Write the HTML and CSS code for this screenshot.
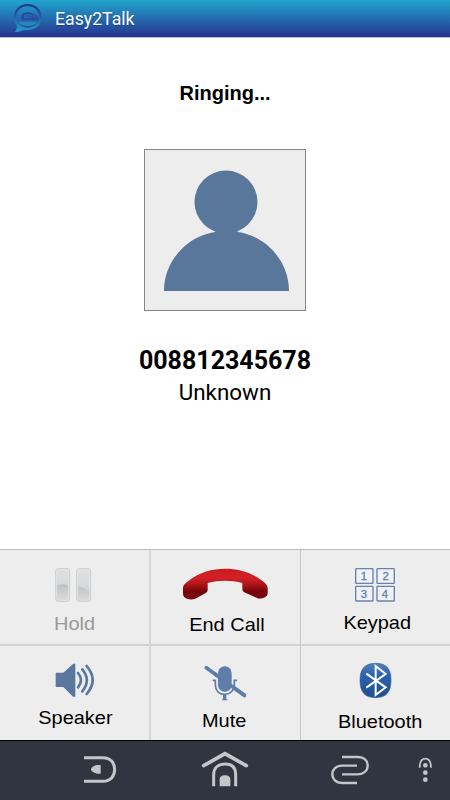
FILE: index.html
```html
<!DOCTYPE html>
<html lang="en">
<head>
  <meta charset="UTF-8" />
  <meta name="viewport" content="width=device-width, initial-scale=1.0"/>
  <title>Easy2Talk</title>
  <link rel="stylesheet" href="styles.css">
</head>
<body>

  <div class="header">
    <svg class="logo" viewBox="36 6 96 96">
      <defs>
        <linearGradient id="logo" x1="0" y1="0" x2="0" y2="1">
          <stop offset="0" stop-color="#25368f"/>
          <stop offset="0.4" stop-color="#2755a3"/>
          <stop offset="1" stop-color="#20a4cf"/>
        </linearGradient>
      </defs>
      <path fill="url(#logo)" fill-rule="evenodd" d="M83 12C107 12 125 28 125 51C125 75 107 90 83 90C75 90 70 89 64 92Q57 96 44 96Q51 90 51 79C45 72 42 62 42 51C42 28 60 12 83 12ZM83 19C63 19 49 32 49 51C49 69 63 83 83 83C103 83 117 70 117 51C117 32 103 19 83 19Z"/>
      <path fill="#2746a0" d="M64 56Q62 41 75 38Q91 33 107 44Q116 50 115 59H66Z"/>
      <path fill="none" stroke="#2a82bb" stroke-width="2" d="M72 48Q76 43 88 44L94 48H73V53H96M94 43L104 55M100 43L110 55"/>
      <path fill="#2787bd" d="M54 65H112Q104 78 83 78Q63 78 54 65Z"/>
    </svg>
    <span class="app-name">Easy2Talk</span>
  </div>

  <div class="call">
    <div class="status">Ringing...</div>
    <div class="avatar">
      <svg viewBox="0 0 162 162">
        <circle cx="82" cy="53" r="31.5"/>
        <path d="M73 79H91L94 83C122 87 145 112 145 142H20C20 112 43 87 71 83Z"/>
      </svg>
    </div>
    <div class="number">008812345678</div>
    <div class="name">Unknown</div>
  </div>

  <div class="buttons">
    <div class="button hold">
      <svg viewBox="0 30 447 165">
        <defs>
          <linearGradient id="bar" x1="0" y1="0" x2="0" y2="1">
            <stop offset="0" stop-color="#dfe0e1"/>
            <stop offset="1" stop-color="#d0d1d3"/>
          </linearGradient>
          <linearGradient id="shade" x1="0" y1="0" x2="0" y2="1">
            <stop offset="0" stop-color="#bfc1c3"/>
            <stop offset="1" stop-color="#d9dadb"/>
          </linearGradient>
        </defs>
        <g fill="url(#bar)" stroke="#cecfd0" stroke-width="3">
          <rect x="167" y="86" width="42" height="98" rx="7"/>
          <rect x="230" y="86" width="42" height="98" rx="7"/>
        </g>
        <path fill="url(#shade)" d="M171 136Q190 130 205 136V177Q205 180 200 180H176Q171 180 171 177Z"/>
        <path fill="url(#shade)" d="M234 138Q254 143 268 154V177Q268 180 263 180H239Q234 180 234 177Z"/>
        <g fill="none" stroke="#e7e8e8" stroke-width="2">
          <rect x="170" y="89" width="36" height="92" rx="5"/>
          <rect x="233" y="89" width="36" height="92" rx="5"/>
        </g>
      </svg>
      <span>Hold</span>
    </div>
    <div class="button end-call">
      <svg viewBox="3 30 447 165">
        <defs>
          <linearGradient id="red" x1="0" y1="0" x2="0" y2="1">
            <stop offset="0" stop-color="#c91d20"/>
            <stop offset="0.3" stop-color="#d32027"/>
            <stop offset="0.48" stop-color="#b5161c"/>
            <stop offset="0.75" stop-color="#75030a"/>
            <stop offset="1" stop-color="#7d060e"/>
          </linearGradient>
        </defs>
        <path fill="url(#red)" d="M99 146C98 135 105 130 116 122C149 96 186 86 226 86C266 86 304 97 338 123C348 131 354 136 353 148V160C352 171 341 176 327 176Q322 175 316 172L283 157Q277 154 277 147V129C245 120 207 120 173 129V150Q173 156 167 159L136 176C117 182 100 175 99 162Z"/>
      </svg>
      <span>End Call</span>
    </div>
    <div class="button keypad">
      <svg viewBox="3 30 447 165">
        <g fill="#eff1f4" stroke="#6583ae" stroke-width="4">
          <rect x="167" y="86" width="52" height="44" rx="2"/>
          <rect x="231" y="86" width="52" height="44" rx="2"/>
          <rect x="167" y="139" width="52" height="44" rx="2"/>
          <rect x="231" y="139" width="52" height="44" rx="2"/>
        </g>
        <g class="keys">
          <text x="192" y="120">1</text>
          <text x="257" y="120">2</text>
          <text x="192" y="173">3</text>
          <text x="255" y="173">4</text>
        </g>
      </svg>
      <span>Keypad</span>
    </div>
    <div class="button speaker">
      <svg viewBox="0 18 447 165">
        <path fill="#5a779f" d="M167 98H190L220 71H226V170H219L190 141H167Z"/>
        <g fill="none" stroke="#5a779f" stroke-width="8" stroke-linecap="round">
          <path d="M234 99Q252 120 234 142"/>
          <path d="M247 88Q274 120 247 154"/>
          <path d="M260 78Q296 120 260 162"/>
        </g>
      </svg>
      <span>Speaker</span>
    </div>
    <div class="button mute">
      <svg viewBox="3 18 447 165">
        <path stroke="#5f7da9" stroke-width="11" stroke-linecap="round" d="M169 83L283 166"/>
        <rect x="200" y="75" width="49" height="84" rx="23" fill="#ededed"/>
        <path stroke="#5f7da9" stroke-width="11" stroke-linecap="round" d="M240 135L283 166"/>
        <path stroke="#5f7da9" stroke-width="11" d="M192 100L210 113"/>
        <rect x="204" y="79" width="41" height="76" rx="20" fill="#5f7da9"/>
        <path fill="none" stroke="#5f7da9" stroke-width="5" d="M188 121H196V132C196 152 207 163 224 163C241 163 253 151 253 132V121H261"/>
        <path fill="#5f7da9" d="M219 163H229V176L234 181H215L219 176Z"/>
      </svg>
      <span>Mute</span>
    </div>
    <div class="button bluetooth">
      <svg viewBox="3 18 447 165">
        <defs>
          <linearGradient id="blue" x1="0" y1="0" x2="0" y2="1">
            <stop offset="0" stop-color="#5480b8"/>
            <stop offset="0.35" stop-color="#2d62ab"/>
            <stop offset="1" stop-color="#1f4d92"/>
          </linearGradient>
        </defs>
        <path fill="url(#blue)" stroke="#34609e" stroke-width="2" d="M227 70C260 70 273 87 273 121C273 156 259 173 227 173C194 173 180 156 180 121C180 87 194 70 227 70Z"/>
        <path fill="none" stroke="#fff" stroke-width="6" d="M199 101L257 142L227 165V78L257 102L199 143"/>
      </svg>
      <span>Bluetooth</span>
    </div>
  </div>

  <div class="navbar">
    <svg class="back" viewBox="225 18 150 177">
      <path class="line" d="M252 68H308C333 68 344 85 344 103C344 122 333 139 308 139H252"/>
      <path class="solid" d="M302 90V116H292C280 114 273 108 273 103C273 98 280 92 292 90Z"/>
    </svg>
    <svg class="home" viewBox="600 18 150 177">
      <path class="line roof" d="M611 92L675 56L739 92"/>
      <path class="line" d="M641 154V119C641 98 656 87 676 87C696 87 707 98 707 119V154"/>
      <path class="solid" d="M659 154V133C659 125 666 121 675 121C685 121 691 125 691 133V154Z"/>
    </svg>
    <svg class="recent" viewBox="300 18 150 177">
      <path class="line thin" d="M351 66H397C419 66 428 79 428 92C428 106 417 118 397 118H351M396 92H352C331 92 322 105 322 118C322 132 332 144 352 144H396"/>
    </svg>
    <svg class="menu" viewBox="561 18 78 177">
      <path class="line arch" d="M584 98C584 78 591 71 601 71C612 71 618 78 618 98"/>
      <circle class="solid" cx="601" cy="91" r="7"/>
      <circle class="solid" cx="601" cy="113" r="7"/>
      <circle class="solid" cx="601" cy="134" r="7"/>
    </svg>
  </div>

</body>
</html>
```

FILE: styles.css
```css
* {
  box-sizing: border-box;
}

body {
  margin: 0;
  width: 450px;
  height: 800px;
  display: flex;
  flex-direction: column;
  overflow: hidden;
  background-color: #fff;
  color: #000;
  font-family: Roboto, sans-serif;
}

svg {
  display: block;
}

.header {
  height: 38px;
  display: flex;
  align-items: flex-start;
  padding: 2px 0 0 12px;
  background: linear-gradient(#20a6cd, #26328f);
  border-bottom: 1px solid #b5b9dc;
}

.logo {
  width: 32px;
  height: 32px;
}

.app-name {
  margin-left: 11px;
  color: #fff;
  font-size: 17.7px;
  line-height: 34px;
  text-shadow: 0 1px 1px rgba(0, 0, 0, 0.3);
}

.call {
  flex: 1;
  display: flex;
  flex-direction: column;
  align-items: center;
}

.status {
  margin-top: 43px;
  font-family: "Liberation Sans", Arial, sans-serif;
  font-size: 20px;
  font-weight: bold;
  line-height: 24px;
}

.avatar {
  width: 162px;
  height: 162px;
  margin-top: 44px;
  background-color: #ededed;
  border: 1px solid #858585;
}

.avatar svg {
  width: 162px;
  height: 162px;
  margin: -1px;
  fill: #59769b;
}

.number {
  margin-top: 34px;
  font-size: 25px;
  font-weight: bold;
  line-height: 32px;
}

.name {
  font-size: 22.4px;
  line-height: 31px;
}

.buttons {
  display: grid;
  grid-template-columns: 151px 150px 149px;
  grid-template-rows: 96px 94px;
  border-top: 1px solid #bababa;
  background-color: #ededed;
}

.button {
  display: flex;
  flex-direction: column;
  align-items: center;
  border-right: 1px solid #c6c6c6;
  font-family: "Liberation Sans", Arial, sans-serif;
  font-size: 19px;
  line-height: 22px;
}

.button svg {
  width: 149px;
  height: 55px;
  flex-shrink: 0;
}

.button span {
  transform: scaleX(1.05);
}

.hold, .end-call, .keypad {
  border-bottom: 2px solid #d3d3d3;
}

.hold, .speaker {
  border-right: 2px solid #d6d6d6;
}

.keypad, .bluetooth {
  border-right: none;
}

.hold span {
  margin-top: 8px;
  color: #999;
}

.end-call span {
  margin: 9px 0 0 2px;
}

.keypad span {
  margin: 7px 0 0 3px;
}

.speaker span {
  margin-top: 6px;
  margin-left: 1px;
}

.mute span {
  margin: 9px 3px 0 0;
}

.bluetooth span {
  margin: 10px 0 0 9px;
}

.keys {
  fill: #6583ae;
  stroke: #6583ae;
  stroke-width: 1;
  font-size: 34px;
  text-anchor: middle;
}

.navbar {
  height: 60px;
  display: flex;
  background-color: #313540;
  border-top: 1px solid #000;
}

.navbar svg {
  width: 50px;
  height: 59px;
}

.navbar .back, .navbar .home, .navbar .recent {
  margin-left: 75px;
}

.navbar .menu {
  width: 26px;
  margin-left: 37px;
}

.line {
  fill: none;
  stroke: #c4c6ca;
  stroke-width: 9;
}

.roof {
  stroke-width: 11;
  stroke-linecap: round;
}

.thin {
  stroke-width: 7;
}

.arch {
  stroke-width: 5;
}

.solid {
  fill: #c4c6ca;
}
```
